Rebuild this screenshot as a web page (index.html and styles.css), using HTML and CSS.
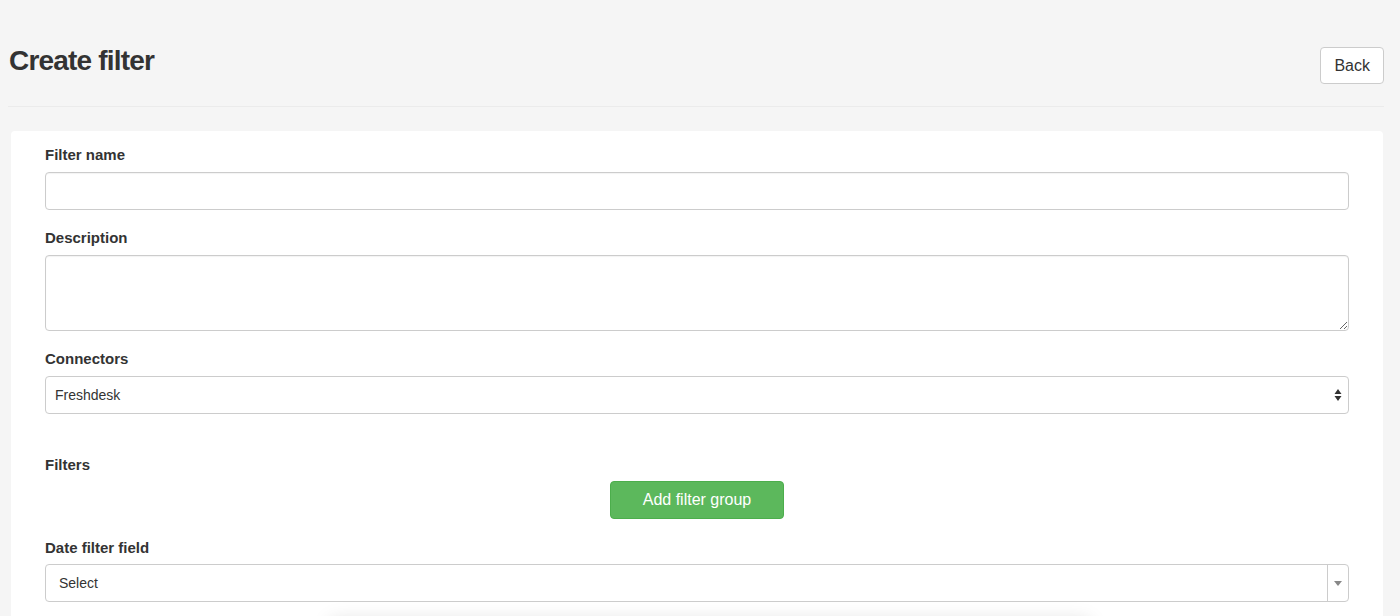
FILE: index.html
```html
<!DOCTYPE html>
<html>
<head>
<meta charset="utf-8">
<link rel="stylesheet" href="styles.css">
</head>
<body>
<div class="page">
  <header class="page-header">
    <h1 class="title">Create filter</h1>
    <button class="btn btn-default">Back</button>
  </header>
  <div class="card">
    <div class="field">
      <label class="label">Filter name</label>
      <input class="control" type="text">
    </div>
    <div class="field">
      <label class="label">Description</label>
      <textarea class="control textarea"></textarea>
    </div>
    <div class="field field-wide">
      <label class="label">Connectors</label>
      <div class="control select">
        <span>Freshdesk</span>
        <svg class="updown" width="8" height="14" viewBox="0 0 8 14"><path d="M4 1 L7.5 6 H0.5 Z M4 13 L0.5 8 H7.5 Z" fill="#333"/></svg>
      </div>
    </div>
    <div class="field tight filters">
      <label class="label">Filters</label>
      <div class="center-row">
        <button class="btn btn-success">Add filter group</button>
      </div>
    </div>
    <div class="field tight">
      <label class="label">Date filter field</label>
      <div class="control select2">
        <span class="s2-text">Select</span>
        <span class="s2-arrow"><svg width="8" height="5" viewBox="0 0 8 5"><path d="M0 0 H8 L4 5 Z" fill="#888"/></svg></span>
      </div>
    </div>
  </div>
</div>
<div class="dropdown-shadow"></div>
</body>
</html>
```

FILE: styles.css
```css
html, body {
  margin: 0;
  padding: 0;
  background: #f5f5f5;
  font-family: "Liberation Sans", Arial, sans-serif;
  color: #333;
  overflow: hidden;
  height: 616px;
}

.page {
  width: 1376px;
  margin-left: 8px;
}

.page-header {
  display: flex;
  justify-content: space-between;
  align-items: flex-start;
  padding-top: 46px;
  padding-bottom: 22px;
  border-bottom: 1px solid #ebebeb;
  margin-bottom: 24px;
}

.title {
  margin: 0;
  margin-left: 1px;
  font-size: 28px;
  font-weight: 700;
  letter-spacing: -0.8px;
  line-height: 30px;
  color: #333;
}

.btn {
  font-family: "Liberation Sans", Arial, sans-serif;
  font-size: 16px;
  border-radius: 4px;
  cursor: pointer;
  line-height: 20px;
}

.btn-default {
  background: #fff;
  border: 1px solid #ccc;
  color: #333;
  padding: 7px 13px;
  height: 37px;
  margin-top: 1px;
}

.btn-success {
  background: #5cb85c;
  border: 1px solid #4cae4c;
  color: #fff;
  width: 174px;
  height: 38px;
  padding: 0;
}

.card {
  background: #fff;
  border-radius: 4px;
  margin: 0 1px 0 3px;
  padding: 14px 34px 40px 34px;
  height: 520px;
}

.field {
  display: flex;
  flex-direction: column;
  margin-bottom: 18px;
}

.field-wide {
  margin-bottom: 41px;
}

.filters {
  margin-bottom: 19px;
}

.label {
  font-size: 15px;
  font-weight: 700;
  line-height: 20px;
  margin-bottom: 7px;
  color: #333;
}

.tight .label {
  margin-bottom: 6px;
}

.control {
  box-sizing: border-box;
  width: 100%;
  height: 38px;
  border: 1px solid #ccc;
  border-radius: 4px;
  background: #fff;
  font-family: "Liberation Sans", Arial, sans-serif;
  font-size: 14px;
  color: #333;
  box-shadow: inset 0 1px 1px rgba(0,0,0,0.05);
  margin: 0;
}

.textarea {
  height: 76px;
  resize: vertical;
  display: block;
}

.select {
  display: flex;
  align-items: center;
  justify-content: space-between;
  padding: 0 6px 0 9px;
  box-shadow: none;
}

.select2 {
  display: flex;
  align-items: center;
  justify-content: space-between;
  box-shadow: none;
  padding: 0;
}

.s2-text {
  padding-left: 13px;
}

.s2-arrow {
  display: flex;
  align-items: center;
  justify-content: center;
  width: 20px;
  height: 100%;
  border-left: 1px solid #ccc;
}

.center-row {
  display: flex;
  justify-content: center;
}

.dropdown-shadow {
  position: absolute;
  left: 330px;
  top: 622px;
  width: 760px;
  height: 60px;
  background: #fff;
  box-shadow: 0 -2px 18px rgba(0,0,0,0.13);
}
```
